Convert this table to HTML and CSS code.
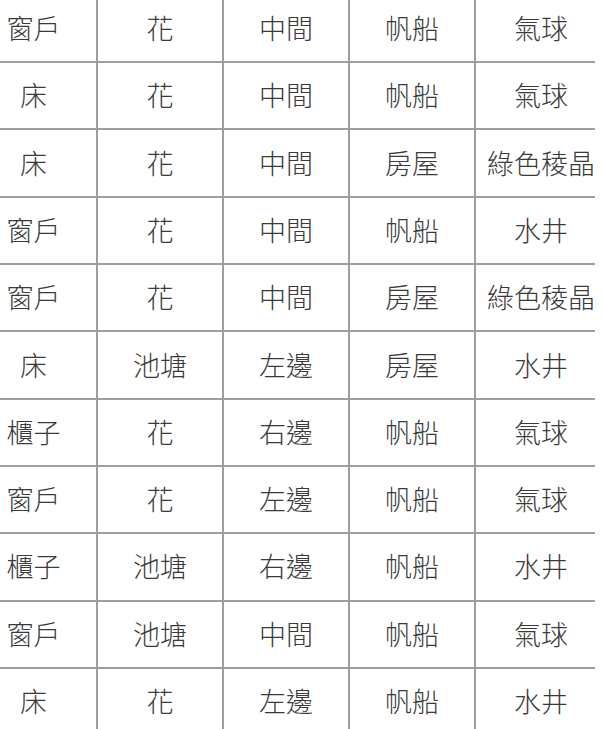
FILE: index.html
```html
<!DOCTYPE html>
<html lang="zh-Hant">
<head>
<meta charset="utf-8">
<link rel="stylesheet" href="styles.css">
</head>
<body>
<div class="frame">
  <div class="grid">
    <div class="cell">窗戶</div><div class="cell">花</div><div class="cell">中間</div><div class="cell">帆船</div><div class="cell">氣球</div>
    <div class="cell">床</div><div class="cell">花</div><div class="cell">中間</div><div class="cell">帆船</div><div class="cell">氣球</div>
    <div class="cell">床</div><div class="cell">花</div><div class="cell">中間</div><div class="cell">房屋</div><div class="cell">綠色稜晶</div>
    <div class="cell">窗戶</div><div class="cell">花</div><div class="cell">中間</div><div class="cell">帆船</div><div class="cell">水井</div>
    <div class="cell">窗戶</div><div class="cell">花</div><div class="cell">中間</div><div class="cell">房屋</div><div class="cell">綠色稜晶</div>
    <div class="cell">床</div><div class="cell">池塘</div><div class="cell">左邊</div><div class="cell">房屋</div><div class="cell">水井</div>
    <div class="cell">櫃子</div><div class="cell">花</div><div class="cell">右邊</div><div class="cell">帆船</div><div class="cell">氣球</div>
    <div class="cell">窗戶</div><div class="cell">花</div><div class="cell">左邊</div><div class="cell">帆船</div><div class="cell">氣球</div>
    <div class="cell">櫃子</div><div class="cell">池塘</div><div class="cell">右邊</div><div class="cell">帆船</div><div class="cell">水井</div>
    <div class="cell">窗戶</div><div class="cell">池塘</div><div class="cell">中間</div><div class="cell">帆船</div><div class="cell">氣球</div>
    <div class="cell">床</div><div class="cell">花</div><div class="cell">左邊</div><div class="cell">帆船</div><div class="cell">水井</div>
  </div>
</div>
</body>
</html>
```

FILE: styles.css
```css
html, body {
  margin: 0;
  padding: 0;
  background: #ffffff;
  overflow: hidden;
}

.frame {
  width: 595px;
  height: 729px;
  overflow: hidden;
  background: #ffffff;
}

.grid {
  display: grid;
  grid-template-columns: 125px 124px 124px 124px 130px;
  grid-auto-rows: 65.33px;
  gap: 2px;
  background: #9e9e9e;
  margin-left: -29px;
  margin-top: -4.3px;
  width: 635px;
}

.cell {
  background: #ffffff;
  display: flex;
  align-items: center;
  justify-content: center;
  padding-bottom: 2px;
  box-sizing: border-box;
  font-family: "Noto Sans CJK TC", "Noto Sans CJK SC", sans-serif;
  font-size: 27px;
  font-weight: 300;
  color: #3a3a3a;
  white-space: nowrap;
}
```
